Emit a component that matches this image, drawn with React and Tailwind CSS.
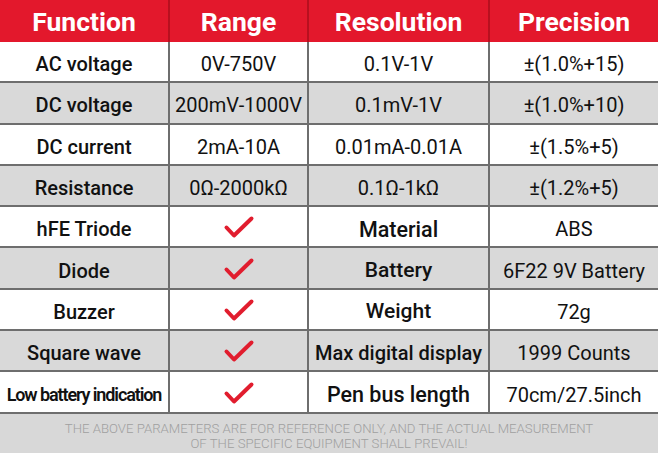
import React from "react";

const Check = () => (
  <svg width="32" height="24" viewBox="0 0 32 24" className="block">
    <path d="M3.5 12.5 L11 20.5 L28.5 3.5" fill="none" stroke="#e11d2e" strokeWidth="4" strokeLinecap="round" strokeLinejoin="round" />
  </svg>
);

const rows = [
  { a: "AC voltage", b: "0V-750V", c: "0.1V-1V", d: "±(1.0%+15)" },
  { a: "DC voltage", b: "200mV-1000V", c: "0.1mV-1V", d: "±(1.0%+10)" },
  { a: "DC current", b: "2mA-10A", c: "0.01mA-0.01A", d: "±(1.5%+5)" },
  { a: "Resistance", b: "0Ω-2000kΩ", c: "0.1Ω-1kΩ", d: "±(1.2%+5)" },
  { a: "hFE Triode", check: true, c: "Material", cBold: "text-[21.5px]", d: "ABS" },
  { a: "Diode", check: true, c: "Battery", cBold: "text-[21px]", d: "6F22 9V Battery" },
  { a: "Buzzer", check: true, c: "Weight", cBold: "text-[21px]", d: "72g" },
  { a: "Square wave", check: true, c: "Max digital display", cBold: "text-[20px]", d: "1999 Counts" },
  { a: "Low battery indication", small: true, check: true, c: "Pen bus length", cBold: "text-[21.5px]", d: "70cm/27.5inch" },
];

export default function App() {
  return (
    <div className="w-[658px] h-[453px] bg-white text-[#111] overflow-hidden" style={{ fontFamily: "Roboto, 'Liberation Sans', sans-serif" }}>
      <div className="grid grid-cols-[168px_139px_181px_170px] h-[42px] bg-[#e3182c] text-white font-bold text-[26.5px] leading-none">
        <div className="flex items-center justify-center pt-[3px]">Function</div>
        <div className="flex items-center justify-center pt-[3px] border-l-2 border-[#b8101f]">Range</div>
        <div className="flex items-center justify-center pt-[3px] border-l-2 border-[#b8101f]">Resolution</div>
        <div className="flex items-center justify-center pt-[3px] border-l-2 border-[#b8101f]">Precision</div>
      </div>
      {rows.map((r, i) => (
        <div
          key={i}
          className={`grid grid-cols-[168px_139px_181px_170px] h-[41.3px] border-b-2 border-[#6e6e6e] leading-none ${i % 2 === 1 ? "bg-[#d9d9d9]" : "bg-white"}`}
        >
          <div className={`flex items-center justify-center pt-[5px] whitespace-nowrap ${r.small ? "text-[18px] font-semibold tracking-[-1.1px]" : "text-[20px] font-medium"}`}>{r.a}</div>
          <div className={`flex items-center justify-center border-l-2 border-[#6e6e6e] text-[20px] whitespace-nowrap ${r.check ? "pt-[1px]" : "pt-[5px]"}`}>
            {r.check ? <Check /> : r.b}
          </div>
          <div className={`flex items-center justify-center pt-[5px] border-l-2 border-[#6e6e6e] whitespace-nowrap ${r.cBold ? `font-medium ${r.cBold}` : "text-[20px]"}`}>{r.c}</div>
          <div className="flex items-center justify-center pt-[5px] border-l-2 border-[#6e6e6e] text-[20px] whitespace-nowrap">{r.d}</div>
        </div>
      ))}
      <div className="h-[39px] bg-[#d8d8d8] flex flex-col items-center justify-center pt-[5px] text-[#a0a0a0] font-light text-[13.2px] leading-[15px] text-center">
        <div>THE ABOVE PARAMETERS ARE FOR REFERENCE ONLY, AND THE ACTUAL MEASUREMENT</div>
        <div>OF THE SPECIFIC EQUIPMENT SHALL PREVAIL!</div>
      </div>
    </div>
  );
}
